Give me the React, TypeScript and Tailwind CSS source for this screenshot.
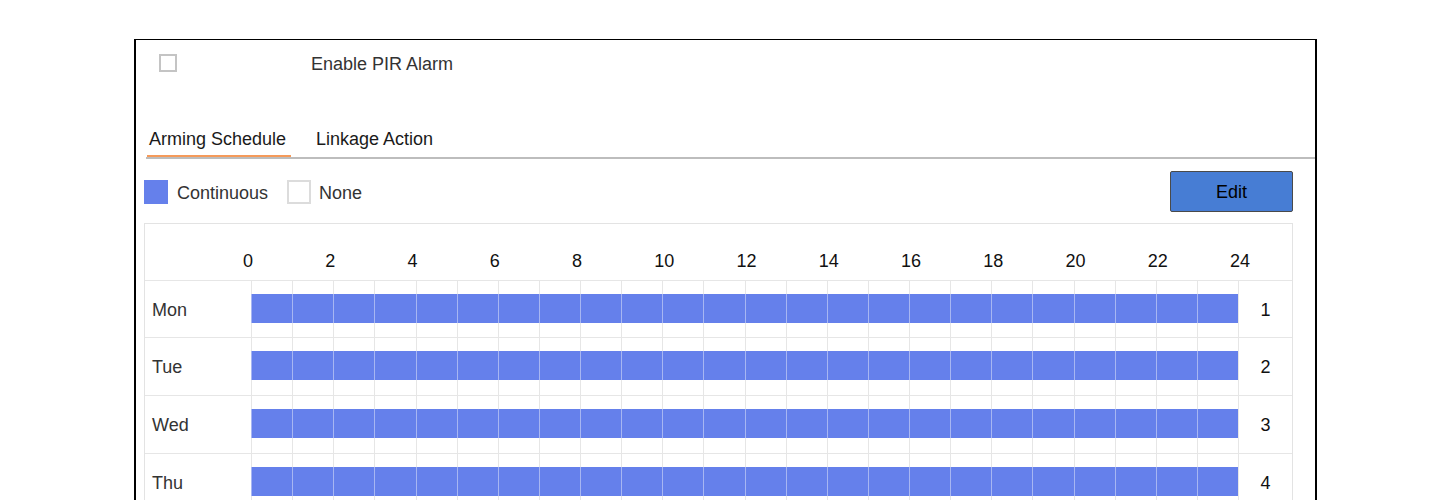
import React from 'react';

const days = ['Mon', 'Tue', 'Wed', 'Thu'];
const rowHeights = ['h-[57px]', 'h-[58px]', 'h-[58px]', 'h-[57px]'];
const hours = Array.from({ length: 24 }, (_, i) => i);
const ticks = [0, 2, 4, 6, 8, 10, 12, 14, 16, 18, 20, 22];

export default function App() {
  return (
    <div
      className="w-[1450px] h-[500px] overflow-hidden bg-white pt-[39px] pl-[134px] text-[18px] text-[#333]"
      style={{ fontFamily: '"Liberation Sans", Arial, sans-serif' }}
    >
      <div className="w-[1183px] h-[700px] border-t border-l-2 border-r-2 border-black">
        {/* enable row */}
        <div className="h-[46px] flex items-center">
          <div className="ml-[23px] w-[18px] h-[18px] border-2 border-[#c4c4c4]" />
          <span className="ml-[134px] pt-[2px]">Enable PIR Alarm</span>
        </div>

        {/* tabs */}
        <div className="mt-[35px] ml-[10px] flex border-b-2 border-[#bdbdbd] text-[#1a1a1a]">
          <div className="ml-px w-[144px] h-[36px] pl-[2px] pt-[2px] flex items-center border-b-2 border-[#f59a5a]">
            Arming Schedule
          </div>
          <div className="ml-[25px] h-[36px] pt-[2px] flex items-center border-b-2 border-transparent">Linkage Action</div>
        </div>

        {/* legend + edit */}
        <div className="mt-[12px] pl-[8px] pr-[22px] flex items-center">
          <div className="w-[24px] h-[24px] bg-[#6580eb]" />
          <span className="ml-[9px] pt-[3px]">Continuous</span>
          <div className="ml-[19px] w-[24px] h-[24px] border-2 border-[#dcdcdc]" />
          <span className="ml-[8px] pt-[3px]">None</span>
          <div className="flex-1" />
          <button className="w-[123px] h-[41px] pt-[2px] bg-[#477dd4] border border-[#4a4a4a] rounded-[2px] text-black text-[18px]">
            Edit
          </button>
        </div>

        {/* schedule table */}
        <div className="mt-[11px] ml-[8px] w-[1149px] border border-[#e3e3e3]">
          <div className="h-[56px] pt-[18px] grid grid-cols-[106px_repeat(24,minmax(0,1fr))_54px] items-center text-[#111]">
            <div />
            {ticks.map((t) => (
              <div key={t} className="col-span-2">
                <span className="-ml-[8px]">{t}</span>
              </div>
            ))}
            <div>
              <span className="-ml-[8px]">24</span>
            </div>
          </div>
          {days.map((d, i) => (
            <div
              key={d}
              className={`${rowHeights[i]} border-t border-[#e6e6e6] grid grid-cols-[106px_repeat(24,minmax(0,1fr))_54px]`}
            >
              <div className="pl-[7px] pt-[2px] flex items-center">{d}</div>
              {hours.map((h) => (
                <div key={h} className="border-l border-[#e6e6e6] pt-[13px]">
                  <div className="-ml-px h-[29px] bg-[#6580eb] border-l border-[#a7b6f2]" />
                </div>
              ))}
              <div className="border-l border-[#e6e6e6] pt-[2px] flex items-center justify-center text-[#111]">{i + 1}</div>
            </div>
          ))}
        </div>
      </div>
    </div>
  );
}
